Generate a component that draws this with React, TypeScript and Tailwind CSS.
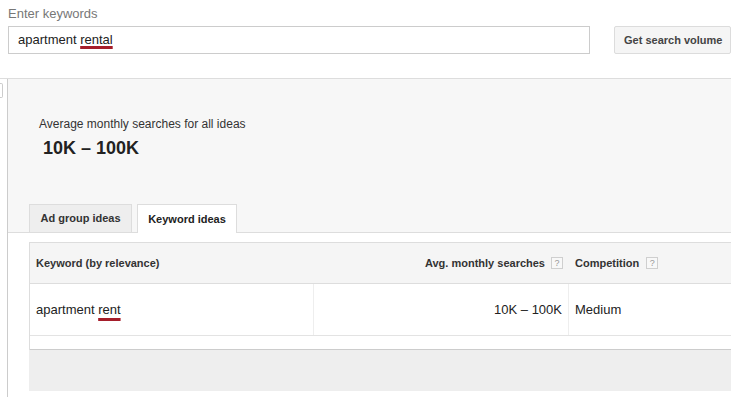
export default function App() {
  const q = (
    <span className="w-[12px] h-[12px] border border-[#cfcfcf] bg-[#f8f8f8] text-[9px] leading-[10px] text-[#999] font-normal flex items-center justify-center shrink-0">
      ?
    </span>
  );
  return (
    <div className="w-[731px] h-[397px] overflow-hidden bg-white font-['Liberation_Sans',Arial,sans-serif] text-[#222]">
      <div className="pl-[8px] pt-[6px]">
        <div className="text-[13px] leading-[16px] text-[#777] mb-[4px]">Enter keywords</div>
        <div className="flex">
          <div className="w-[582px] h-[28px] shrink-0 border border-[#cccccc] pl-[9px] text-[13px] leading-[26px] text-[#222]">
            apartment{" "}
            <span className="underline decoration-[#a51e2b] decoration-[3px] underline-offset-[2px]">rental</span>
          </div>
          <button className="ml-[24px] shrink-0 w-[117px] h-[28px] border border-[#dcdcdc] rounded-[2px] bg-[#f5f5f5] text-[11px] font-bold text-[#444] text-left pl-[9px]">
            Get search volume
          </button>
        </div>
      </div>
      <div className="mt-[24px] border-t border-[#dddddd] flex h-[319px]">
        <div className="w-[7px] shrink-0 pt-[4px]">
          <div className="w-[3px] h-[15px] border border-l-0 border-[#cccccc] rounded-r-[2px]" />
        </div>
        <div className="flex-1 min-w-0 border-l border-[#cccccc] flex flex-col">
          <div className="bg-[#f7f7f7] pt-[38px]">
            <div className="pl-[31px] text-[12px] leading-[15px] text-[#333]">
              Average monthly searches for all ideas
            </div>
            <div className="pl-[35px] mt-[5px] text-[18px] leading-[22px] font-bold text-[#222]">10K – 100K</div>
            <div className="mt-[45px] pl-[21px] flex items-end gap-[5px] border-b border-[#dddddd] h-[29px]">
              <div className="w-[103px] h-[28px] border border-b-0 border-[#dddddd] bg-[#eeeeee] flex items-center justify-center text-[11px] font-bold text-[#333]">
                Ad group ideas
              </div>
              <div className="w-[100px] h-[29px] -mb-px border border-b-0 border-[#dddddd] bg-white flex items-center justify-center text-[11px] font-bold text-[#222]">
                Keyword ideas
              </div>
            </div>
          </div>
          <div className="flex-1 bg-white pt-[9px] pl-[21px]">
            <div className="w-[740px] border-t border-l border-[#dddddd]">
              <div className="grid grid-cols-[284px_255px_1fr] h-[41px] bg-[#f5f5f5] border-b border-[#dddddd] text-[11px] font-bold text-[#333]">
                <div className="pl-[6px] flex items-center">Keyword (by relevance)</div>
                <div className="flex items-center justify-end gap-[6px] pr-[6px]">
                  Avg. monthly searches {q}
                </div>
                <div className="flex items-center gap-[7px] pl-[6px]">
                  Competition {q}
                </div>
              </div>
              <div className="grid grid-cols-[284px_255px_1fr] h-[52px] border-b border-[#e3e3e3] text-[13px] text-[#222]">
                <div className="pl-[6px] flex items-center border-r border-[#eeeeee]">
                  <span>
                    apartment{" "}
                    <span className="underline decoration-[#a51e2b] decoration-[3px] underline-offset-[4px]">rent</span>
                  </span>
                </div>
                <div className="flex items-center justify-end pr-[6px] border-r border-[#eeeeee]">10K – 100K</div>
                <div className="flex items-center pl-[6px]">Medium</div>
              </div>
              <div className="h-[14px] border-b border-[#cccccc]" />
            </div>
            <div className="w-[740px] h-[41px] bg-[#eeeeee]" />
          </div>
        </div>
      </div>
    </div>
  );
}
